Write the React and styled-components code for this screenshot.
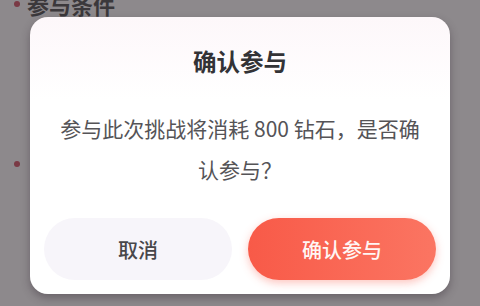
import React from 'react'
import styled, { createGlobalStyle } from 'styled-components';

const GlobalStyle = createGlobalStyle`
  html, body {
    margin: 0;
    padding: 0;
    background: #8c888b;
  }
  body {
    font-family: "Noto Sans CJK SC", "Noto Sans", sans-serif;
  }
`;

const Page = styled.div`
  position: relative;
  width: 480px;
  height: 306px;
  overflow: hidden;
  background: #8d898c;
`;

const Section = styled.div`
  padding: 0 0 0 14px;
  margin-top: -11px;
`;

const Item = styled.div`
  display: flex;
  align-items: center;
  gap: 7px;
  height: ${p => p.h || 30}px;
  font-size: 22px;
  font-weight: 700;
  color: #3b383b;
`;

const Dot = styled.span`
  width: 6px;
  height: 6px;
  border-radius: 50%;
  background: #7a3a45;
  flex: none;
`;

const Overlay = styled.div`
  position: absolute;
  inset: 0;
  display: flex;
  justify-content: center;
  align-items: flex-start;
  padding-top: 17px;
`;

const Modal = styled.div`
  width: 420px;
  height: 277px;
  box-sizing: border-box;
  border-radius: 18px;
  background: linear-gradient(180deg, #fdf7fa 0%, #ffffff 30%);
  box-shadow: 0 4px 8px rgba(40, 30, 40, 0.35);
  display: flex;
  flex-direction: column;
  align-items: center;
  padding: 28px 14px 14px;
`;

const Title = styled.h2`
  margin: 0;
  font-size: 23.5px;
  line-height: 32px;
  font-weight: 700;
  color: #333336;
`;

const Message = styled.p`
  margin: 31px 0 0;
  width: 370px;
  text-align: center;
  font-size: 21px;
  line-height: 41px;
  color: #555457;
`;

const Actions = styled.div`
  margin-top: auto;
  width: 100%;
  display: grid;
  grid-template-columns: 1fr 1fr;
  gap: 16px;
`;

const Button = styled.button`
  height: 62px;
  border: none;
  border-radius: 31px;
  font-family: inherit;
  font-size: 20px;
  font-weight: 500;
  background: ${p => p.primary ? 'linear-gradient(90deg, #f85a48 0%, #fb7562 100%)' : '#f7f5fa'};
  color: ${p => p.primary ? '#fff6f4' : '#48474a'};
  box-shadow: ${p => p.primary ? '0 3px 8px rgba(248, 90, 72, 0.35)' : 'none'};
`;

const App = () => {
    return (
        <Page>
            <GlobalStyle />
            <Section>
                <Item><Dot />参与条件</Item>
                <Item h={290}><Dot /></Item>
            </Section>
            <Overlay>
                <Modal>
                    <Title>确认参与</Title>
                    <Message>参与此次挑战将消耗 800 钻石，是否确认参与？</Message>
                    <Actions>
                        <Button>取消</Button>
                        <Button primary>确认参与</Button>
                    </Actions>
                </Modal>
            </Overlay>
        </Page>
    )
}

export default App
